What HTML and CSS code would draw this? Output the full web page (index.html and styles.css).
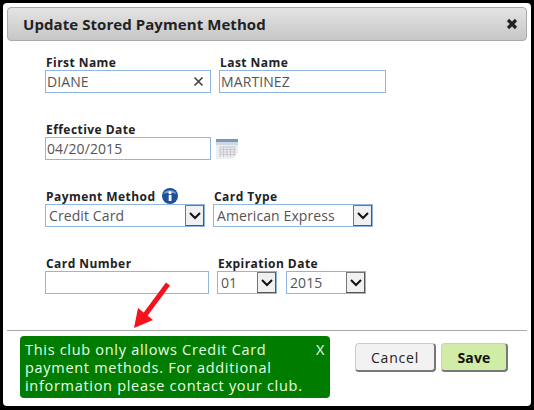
FILE: index.html
```html
<!DOCTYPE html>
<html lang="en">
<head>
    <meta charset="UTF-8">
    <title>Update Stored Payment Method</title>
    <link rel="stylesheet" href="styles.css">
</head>
<body>
    <div class="dialog">
        <div class="dialog-header">
            <h1>Update Stored Payment Method</h1>
            <svg class="close-icon" width="12" height="12" viewBox="0 0 12 12"><path d="M2 2L10 10M10 2L2 10" stroke="#222" stroke-width="3.200" fill="none"/></svg>
        </div>

        <div class="form">
            <div class="row">
                <div class="field">
                    <label>First Name</label>
                    <div class="input w-name">
                        <span>DIANE</span>
                        <svg class="clear-icon" width="11" height="11" viewBox="0 0 11 11"><path d="M1.500 1.500L9.500 9.500M9.500 1.500L1.500 9.500" stroke="#444" stroke-width="1.700" fill="none"/></svg>
                    </div>
                </div>
                <div class="field">
                    <label>Last Name</label>
                    <div class="input w-last"><span>MARTINEZ</span></div>
                </div>
            </div>

            <div class="row">
                <div class="field">
                    <label>Effective Date</label>
                    <div class="date-wrap">
                        <div class="input w-name"><span>04/20/2015</span></div>
                        <svg class="calendar" width="22" height="20" viewBox="0 0 22 20">
                            <rect x="0" y="0" width="22" height="20" fill="#eceef1"/>
                            <rect x="0" y="0" width="22" height="3" fill="#7d97b8"/>
                            <rect x="0" y="3" width="22" height="3" fill="#cdd8e6"/>
                            <path d="M4 8H20M4 10.500H20M4 13H20M4 15.500H20M4 8V18M7.500 8V18M11 8V18M14.500 8V18M18 8V18" stroke="#c6c8cd" stroke-width="1" fill="none"/>
                            <path d="M16 20L22 14V20Z" fill="#fff"/>
                        </svg>
                    </div>
                </div>
            </div>

            <div class="row">
                <div class="field">
                    <label>Payment Method
                        <svg class="info-icon" width="16" height="16" viewBox="0 0 16 16">
                            <circle cx="8" cy="8" r="8" fill="#1c4f9c"/>
                            <path d="M1.500 6A7 6 0 0 1 14.500 6Q8 3.500 1.500 6Z" fill="#7f9fd4"/>
                            <rect x="6.700" y="7" width="2.800" height="6" fill="#fff"/>
                            <circle cx="8" cy="4.700" r="1.600" fill="#fff"/>
                        </svg>
                    </label>
                    <div class="select w-select">
                        <span>Credit Card</span>
                        <div class="arrow"><svg width="12" height="8" viewBox="0 0 12 8"><path d="M1 1L6 6L11 1" stroke="#111" stroke-width="2" fill="none"/></svg></div>
                    </div>
                </div>
                <div class="field">
                    <label>Card Type</label>
                    <div class="select w-select">
                        <span>American Express</span>
                        <div class="arrow"><svg width="12" height="8" viewBox="0 0 12 8"><path d="M1 1L6 6L11 1" stroke="#111" stroke-width="2" fill="none"/></svg></div>
                    </div>
                </div>
            </div>

            <div class="row">
                <div class="field">
                    <label>Card Number</label>
                    <div class="input w-card"></div>
                </div>
                <div class="field">
                    <label>Expiration Date</label>
                    <div class="exp-wrap">
                        <div class="select w-month">
                            <span>01</span>
                            <div class="arrow"><svg width="12" height="8" viewBox="0 0 12 8"><path d="M1 1L6 6L11 1" stroke="#111" stroke-width="2" fill="none"/></svg></div>
                        </div>
                        <div class="select w-year">
                            <span>2015</span>
                            <div class="arrow"><svg width="12" height="8" viewBox="0 0 12 8"><path d="M1 1L6 6L11 1" stroke="#111" stroke-width="2" fill="none"/></svg></div>
                        </div>
                    </div>
                </div>
            </div>
        </div>

        <div class="dialog-footer">
            <div class="notice">
                <p>This club only allows Credit Card payment methods. For additional information please contact your club.</p>
                <span class="notice-close">X</span>
            </div>
            <div class="buttons">
                <button class="btn">Cancel</button>
                <button class="btn btn-save">Save</button>
            </div>
        </div>

        <!-- annotation arrow on top of the screenshot -->
        <svg class="red-arrow" width="40" height="50" viewBox="0 0 40 50">
            <path d="M34 5L11 36" stroke="#f5121c" stroke-width="5" fill="none"/>
            <path d="M0 49L4 29L19 41Z" fill="#f5121c"/>
        </svg>
    </div>
</body>
</html>
```

FILE: styles.css
```css
* {
    margin: 0;
    padding: 0;
    box-sizing: border-box;
}

html, body {
    height: 100%;
    overflow: hidden;
}

body {
    background: #000;
    padding: 3px;
    font-family: 'Open Sans', sans-serif;
    color: #333;
}

.dialog {
    position: relative;
    height: 403px;
    background: #fff;
    border-radius: 4px;
    padding: 4px 4px 0;
}

.dialog-header {
    display: flex;
    justify-content: space-between;
    align-items: center;
    height: 34px;
    padding: 0 8px 0 15px;
    background: linear-gradient(#e4e4e4, #c6c6c6);
    border: 1px solid #aaa;
    border-radius: 4px;
}

h1 {
    font-size: 15px;
    font-weight: 700;
    letter-spacing: 0.07px;
    color: #222;
}

.form {
    padding: 14px 0 0 38px;
    height: 289px;
}

.row {
    display: flex;
    gap: 8px;
    margin-bottom: 29px;
}

label {
    display: flex;
    align-items: center;
    gap: 6px;
    height: 15px;
    padding: 0 0 1px 1px;
    font-size: 12px;
    font-weight: 700;
    letter-spacing: 0.45px;
    color: #222;
}

.input, .select {
    display: flex;
    align-items: center;
    justify-content: space-between;
    height: 23px;
    background: #fff;
    border: 1px solid #8fb7e0;
    font-size: 14px;
    letter-spacing: 0.1px;
    color: #555;
}

.input {
    padding: 0 6px 0 1px;
}

.select {
    padding: 0 0 0 3px;
}

.w-name { width: 166px; }
.w-last { width: 167px; }
.w-select { width: 160px; }
.w-card { width: 164px; }
.w-month { width: 60px; }
.w-year { width: 80px; }

.date-wrap {
    display: flex;
    align-items: center;
    gap: 5px;
}

.exp-wrap {
    display: flex;
    gap: 9px;
}

.arrow {
    display: flex;
    align-items: center;
    justify-content: center;
    width: 19px;
    height: 21px;
    background: #f0f0f0;
    border: 1px solid #777;
    border-right-color: #555;
    border-bottom-color: #555;
}

.dialog-footer {
    display: flex;
    justify-content: space-between;
    padding: 5px 19px 0 13px;
    border-top: 1px solid #aaa;
}

.notice {
    display: flex;
    justify-content: space-between;
    width: 310px;
    height: 62px;
    padding: 5px 5px 0 5px;
    background: #007d00;
    border-radius: 4px;
    font-size: 14.500px;
    line-height: 18px;
    letter-spacing: 0.7px;
    color: #e8ffe8;
}

.notice p {
    width: 285px;
}

.buttons {
    display: flex;
    gap: 5px;
    padding-top: 7px;
}

.btn {
    width: 81px;
    height: 29px;
    background: #f2f2f2;
    border: 1px solid #ccc;
    border-bottom: 2px solid #777;
    border-right: 2px solid #777;
    border-radius: 4px;
    font-family: 'Open Sans', sans-serif;
    font-size: 14px;
    letter-spacing: 0.8px;
    color: #222;
}

.btn-save {
    width: 67px;
    background: #d0eca6;
    font-weight: 700;
    letter-spacing: 0.2px;
    color: #111;
}

.red-arrow {
    position: absolute;
    left: 131px;
    top: 276px;
}
```
